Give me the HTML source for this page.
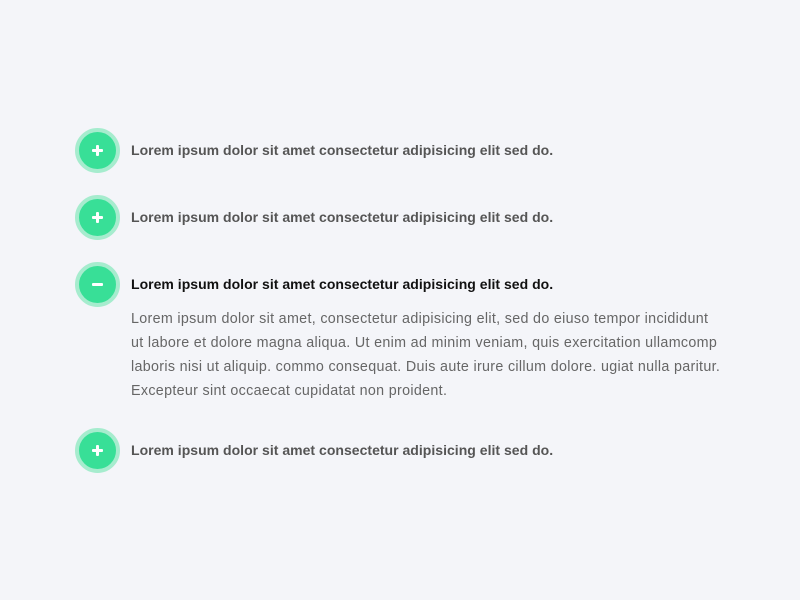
<!DOCTYPE html>
<html><head><style>
body{margin:0;background:#f4f5f9;width:800px;height:600px;position:relative;font-family:"Liberation Sans",Arial,sans-serif;}
.c{position:absolute;left:75px;width:37px;height:37px;border-radius:50%;background:#38df97;border:4px solid #a6ecce;color:#fff;}
.c::before{content:"";position:absolute;left:13px;top:17px;width:11px;height:3px;background:#fff;border-radius:1px}
.p::after{content:"";position:absolute;left:17px;top:13px;width:3px;height:11px;background:#fff;border-radius:1px}
.t{position:absolute;left:131px;font-size:14px;font-weight:bold;color:#555;line-height:20px;white-space:nowrap;letter-spacing:0.02px}
.a{color:#111}
.b{position:absolute;left:131px;top:307px;width:620px;font-size:14.3px;line-height:24px;color:#666;white-space:nowrap;letter-spacing:0.32px}
</style></head><body>
<div class="c p" style="top:128px"></div><div class="t" style="top:140px">Lorem ipsum dolor sit amet consectetur adipisicing elit sed do.</div>
<div class="c p" style="top:195px"></div><div class="t" style="top:207px">Lorem ipsum dolor sit amet consectetur adipisicing elit sed do.</div>
<div class="c" style="top:262px"></div><div class="t a" style="top:274px">Lorem ipsum dolor sit amet consectetur adipisicing elit sed do.</div>
<div class="b">Lorem ipsum dolor sit amet, consectetur adipisicing elit, sed do eiuso tempor incididunt<br>ut labore et dolore magna aliqua. Ut enim ad minim veniam, quis exercitation ullamcomp<br>laboris nisi ut aliquip. commo consequat. Duis aute irure cillum dolore. ugiat nulla paritur.<br>Excepteur sint occaecat cupidatat non proident.</div>
<div class="c p" style="top:428px"></div><div class="t" style="top:440px">Lorem ipsum dolor sit amet consectetur adipisicing elit sed do.</div>
</body></html>
